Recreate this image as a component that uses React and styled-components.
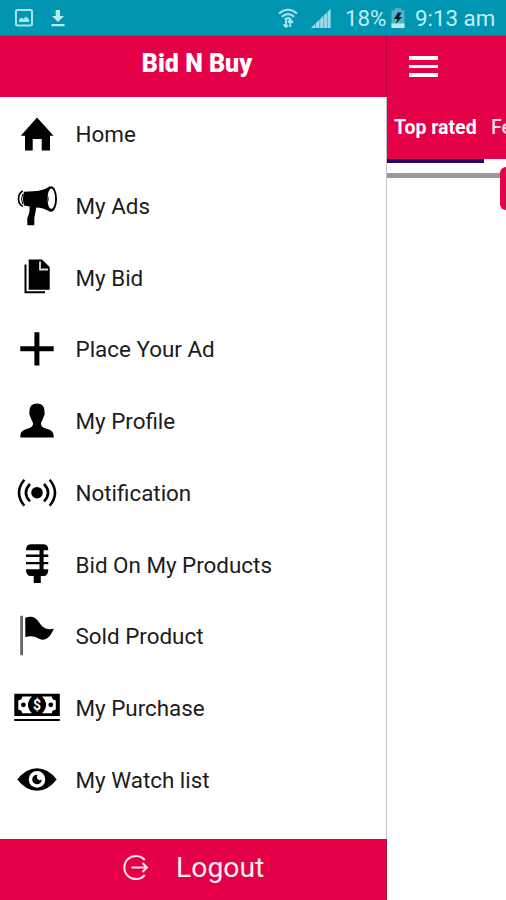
import React from "react";
import styled, { createGlobalStyle } from "styled-components";

const HomeIcon = () => (
  <Icon viewBox="0 0 48 48">
    <path d="M24 7.5L40.6 25.8H37V40.5H28.7V29H19.7V40.5H12V25.8H7.8Z" />
  </Icon>
);

const MegaphoneIcon = () => (
  <Icon viewBox="0 0 48 48">
    <path d="M11 9.8Q9 16.5 11 23.6L16.6 24.6Q17 31 14.3 36V43.3H21.3V36L23.3 25.4Q30 25.5 37 29.6V4.4Q29 9 20 9.2Z" />
    <ellipse cx="38" cy="17" rx="6" ry="12.7" />
    <ellipse cx="38.3" cy="16.8" rx="3.8" ry="10.2" fill="#fff" />
    <path d="M34.7 13Q36.6 17 34.7 21Z" />
    <path d="M9.8 9Q5.4 11.5 5.5 17T9.8 24.2" fill="none" stroke="#000" strokeWidth="1.7" />
    <path d="M9.8 12Q7.2 17 9.8 22" fill="none" stroke="#000" strokeWidth="1" />
  </Icon>
);

const CopyIcon = () => (
  <Icon viewBox="0 0 48 48">
    <path d="M15.7 6.6H29L36.7 14V36.7H15.7Z" />
    <path d="M27 8.5V16.5H35" fill="none" stroke="#ddd" strokeWidth="1.8" />
    <path d="M12.5 11.6V39.2H32" fill="none" stroke="#000" strokeWidth="2" />
  </Icon>
);

const PlusIcon = () => (
  <Icon viewBox="0 0 48 48">
    <path d="M21.4 7.2H26.4V21.2H40.7V26.2H26.4V40.5H21.4V26.2H7.3V21.2H21.4Z" />
  </Icon>
);

const PersonIcon = () => (
  <Icon viewBox="0 0 48 48">
    <path d="M24 6.6C29 6.6 31.6 9.4 31.4 14.5C32.4 16.5 31 19 30.3 20.5C29.6 23.5 28 24.5 28 26.5C28 30 31 31 35 32.2C39.4 33.6 40.7 35.5 40.7 40.5H7.3C7.3 35.5 8.6 33.6 13 32.2C17 31 20 30 20 26.5C20 24.5 18.4 23.5 17.7 20.5C17 19 15.6 16.5 16.6 14.5C16.4 9.4 19 6.6 24 6.6Z" />
  </Icon>
);

const BroadcastIcon = () => (
  <Icon viewBox="0 0 48 48">
    <circle cx="24" cy="23.7" r="5.8" />
    <path
      d="M17 15Q8.8 23.7 17 32.4M31 15Q39.2 23.7 31 32.4M11.3 10.7Q.7 23.7 11.3 36.7M36.7 10.7Q47.3 23.7 36.7 36.7"
      fill="none"
      stroke="#000"
      strokeWidth="2.6"
    />
  </Icon>
);

const MicIcon = () => (
  <Icon viewBox="0 0 48 48">
    <path d="M17.5 4.2H30.8Q35.3 4.2 35.3 10.2H13Q13 4.2 17.5 4.2Z" />
    <path d="M13 14.6H35.3V17H13ZM13 21.9H35.3V24.3H13ZM26.5 9H30.6V31H26.5Z" />
    <path d="M13 29.2H35.3Q35.3 36 30.5 36H27.8V43H20.7V36H17.8Q13 36 13 29.2Z" />
  </Icon>
);

const FlagIcon = () => (
  <Icon viewBox="0 0 48 48">
    <path d="M7.2 3.8H10V43.2H7.2Z" fill="#666" />
    <path d="M12.3 5.8C18 3.4 22.7 5 25.7 9.8C29.5 16 33 18 40.8 16.8C38 23.5 34.5 27.7 29.5 27.7C24.5 27.7 23.5 22.5 12.3 25Z" />
  </Icon>
);

const CashIcon = () => (
  <Icon viewBox="0 0 48 48">
    <path d="M1.3 9.8H46.8V32H1.3ZM1.3 34.9H46.8V37H1.3Z" />
    <path
      d="M9.3 12.4H19Q15 16 15 20.8T19 29.2H9.3Q9 26 5.3 25.5V16.3Q9 15.8 9.3 12.4ZM38.8 12.4H29Q33 16 33 20.8T29 29.2H38.8Q39 26 42.8 25.5V16.3Q39 15.8 38.8 12.4Z"
      fill="#fff"
    />
    <circle cx="10.4" cy="20.8" r="2.4" />
    <circle cx="37.8" cy="20.8" r="2.4" />
    <text x="24" y="25.7" fill="#fff" fontSize="14" fontWeight="700" textAnchor="middle">
      $
    </text>
  </Icon>
);

const EyeIcon = () => (
  <Icon viewBox="0 0 48 48">
    <path d="M4.3 23.4Q13 12.2 24 12.2T43.7 23.4Q35 34.7 24 34.7T4.3 23.4Z" />
    <circle cx="24" cy="23.4" r="8.3" fill="#fff" />
    <path d="M24 18.7A4.8 4.8 0 1 0 28.8 23.8Q24.8 25 24 22Q23.6 20.4 24.4 18.7Z" />
  </Icon>
);

const menuItems = [
  { label: "Home", icon: HomeIcon },
  { label: "My Ads", icon: MegaphoneIcon },
  { label: "My Bid", icon: CopyIcon },
  { label: "Place Your Ad", icon: PlusIcon },
  { label: "My Profile", icon: PersonIcon },
  { label: "Notification", icon: BroadcastIcon },
  { label: "Bid On My Products", icon: MicIcon },
  { label: "Sold Product", icon: FlagIcon },
  { label: "My Purchase", icon: CashIcon },
  { label: "My Watch list", icon: EyeIcon },
];

const StatusIcons = () => (
  <StatusGroup>
    <svg width="18" height="18" viewBox="0 0 18 18">
      <rect x="1" y="1" width="16" height="15.6" rx="1.5" fill="none" stroke="#a9e3ee" strokeWidth="2" />
      <path d="M4 13V10.5L6.5 8.5L8.5 10L11 7.5L14 10.5V13Z" fill="#a9e3ee" />
    </svg>
    <svg width="14" height="18" viewBox="0 0 14 18">
      <path d="M4.7 1H9V7H13L7 13L1 7H4.7ZM.5 15H13.5V17.2H.5Z" fill="#b9eaf3" />
    </svg>
  </StatusGroup>
);

const App = () => {
  return (
    <Screen>
      <GlobalStyle />
      <StatusBar>
        <StatusIcons />
        <StatusGroup $right>
          <WifiIcon viewBox="0 0 20 20">
            <path
              d="M1 5.5Q10 -2 19 5.5M3.8 8.7Q10 3.4 16.2 8.7M6.8 11.6Q10 8.8 13.2 11.6"
              fill="none"
              stroke="#a9e3ee"
              strokeWidth="2.1"
            />
            <path d="M8 11V19M5.5 16.3L8 19L10 17M12.2 19V12M10 14.5L12.2 12L15 14.5" fill="none" stroke="#a9e3ee" strokeWidth="1.9" />
          </WifiIcon>
          <SignalIcon viewBox="0 0 20 19">
            <path d="M0 19L19.5 0V19Z" fill="#58bdce" />
            <path d="M0 19L4 15V19ZM5 14L8 11V19H5ZM9.3 10L12 7.3V19H9.3ZM13.2 6.2L15.7 3.7V19H13.2ZM17 2.5L19.5 0V19H17Z" fill="#9adce8" />
          </SignalIcon>
          <StatusText $width="41px">18%</StatusText>
          <BatteryIcon viewBox="0 0 14 20">
            <path d="M4 0H10V2.3H13.5V20H.5V2.3H4Z" fill="#4fb3c5" />
            <path d="M.5 15.5H13.5V20H.5Z" fill="#b9eaf3" />
            <path d="M7 4.5L3 11H6.5L4.5 16L11 9H8L10.5 4.5Z" fill="#071d22" />
          </BatteryIcon>
          <StatusText $width="80px">9:13 am</StatusText>
        </StatusGroup>
      </StatusBar>
      <Body>
        <Drawer>
          <DrawerHeader>Bid N Buy</DrawerHeader>
          <Menu>
            {menuItems.map(({ label, icon: ItemIcon }) => (
              <MenuItem key={label}>
                <ItemIcon />
                <Label>{label}</Label>
              </MenuItem>
            ))}
          </Menu>
          <Logout>
            <svg width="27" height="27" viewBox="0 0 27 27" fill="none" stroke="#ffe3ea" strokeWidth="2">
              <path d="M22.8 6A11.6 11.6 0 1 0 22.8 21" />
              <path d="M9.5 13.5H24M20.5 9L25 13.5L20.5 18" />
            </svg>
            Logout
          </Logout>
        </Drawer>
        <Page>
          <Toolbar>
            <Burger>
              <span />
              <span />
              <span />
            </Burger>
          </Toolbar>
          <Tabs>
            <Tab $active>Top rated</Tab>
            <Tab>Featured</Tab>
          </Tabs>
          <Divider />
          <RedButton />
        </Page>
      </Body>
    </Screen>
  );
};

export default App;

const GlobalStyle = createGlobalStyle`
  * {
    box-sizing: border-box;
  }
  body {
    margin: 0;
    background: #fff;
    font-family: Roboto, "Liberation Sans", sans-serif;
  }
`;

const Screen = styled.div`
  display: flex;
  flex-direction: column;
  width: 506px;
  height: 900px;
  overflow: hidden;
`;

const StatusBar = styled.div`
  display: flex;
  align-items: center;
  justify-content: space-between;
  flex: none;
  height: 36px;
  padding: 1px 11px 0 15px;
  background: #0096b2;
  border-bottom: 1px solid #35708f;
`;

const StatusGroup = styled.div`
  display: flex;
  align-items: center;
  gap: ${(p) => (p.$right ? "0" : "18px")};
`;

const WifiIcon = styled.svg`
  width: 20px;
  height: 20px;
  margin-right: 13px;
`;

const SignalIcon = styled.svg`
  width: 20px;
  height: 19px;
  margin-right: 14px;
`;

const BatteryIcon = styled.svg`
  width: 14px;
  height: 20px;
  margin: 0 10px 0 5px;
`;

const StatusText = styled.span`
  width: ${(p) => p.$width};
  color: #c3edf4;
  font-size: 22.3px;
  line-height: 28px;
  white-space: nowrap;
`;

const Body = styled.div`
  display: flex;
  flex: 1;
  min-height: 0;
`;

const Drawer = styled.div`
  display: flex;
  flex-direction: column;
  flex: none;
  width: 387px;
  background: linear-gradient(#c4c6c9, #c4c6c9) right / 1.5px 100% no-repeat;
`;

const DrawerHeader = styled.div`
  display: flex;
  align-items: center;
  justify-content: center;
  height: 61px;
  padding: 0 0 6px 8px;
  background: #e40046;
  border-right: 1px solid #b80040;
  color: #fff;
  font-size: 25px;
  font-weight: 900;
`;

const Menu = styled.div`
  display: flex;
  flex-direction: column;
  flex: 1;
  padding-top: 1px;
`;

const MenuItem = styled.div`
  display: flex;
  align-items: center;
  gap: 14.5px;
  height: 71.75px;
  padding-left: 13px;
  color: #1c1c1c;
  font-size: 22.4px;
`;

const Label = styled.span`
  padding-top: 0.3px;
`;

const Icon = styled.svg`
  flex: none;
  width: 48px;
  height: 48px;
`;

const Logout = styled.div`
  display: flex;
  align-items: center;
  gap: 27px;
  height: 61px;
  padding: 0 0 5px 122px;
  background: #e40046;
  border-right: 1px solid #b0102c;
  color: #fff0f3;
  font-size: 28.3px;
`;

const Page = styled.div`
  display: flex;
  flex-direction: column;
  flex: 1;
  min-width: 0;
  overflow: hidden;
`;

const Toolbar = styled.div`
  display: flex;
  align-items: center;
  height: 61px;
  padding-left: 22px;
  background: #e40046;
`;

const Burger = styled.div`
  display: flex;
  flex-direction: column;
  gap: 5px;
  width: 29px;

  span {
    height: 3.5px;
    background: #fff;
  }
`;

const Tabs = styled.div`
  display: flex;
  height: 66px;
  background: linear-gradient(#e40046 62px, #fff 62px);
`;

const Tab = styled.div`
  flex: none;
  width: 97px;
  padding: 19px 0 0 7px;
  color: ${(p) => (p.$active ? "#fff" : "#ffdfe7")};
  font-size: 19.5px;
  font-weight: ${(p) => (p.$active ? 700 : 500)};
  white-space: nowrap;
  border-bottom: 4px solid ${(p) => (p.$active ? "#240863" : "transparent")};
`;

const Divider = styled.div`
  height: 5px;
  margin-top: 10px;
  background: #999;
`;

const RedButton = styled.div`
  align-self: flex-end;
  width: 6px;
  height: 43px;
  margin-top: -11px;
  background: #e40046;
  border-radius: 6px 0 0 6px;
`;
